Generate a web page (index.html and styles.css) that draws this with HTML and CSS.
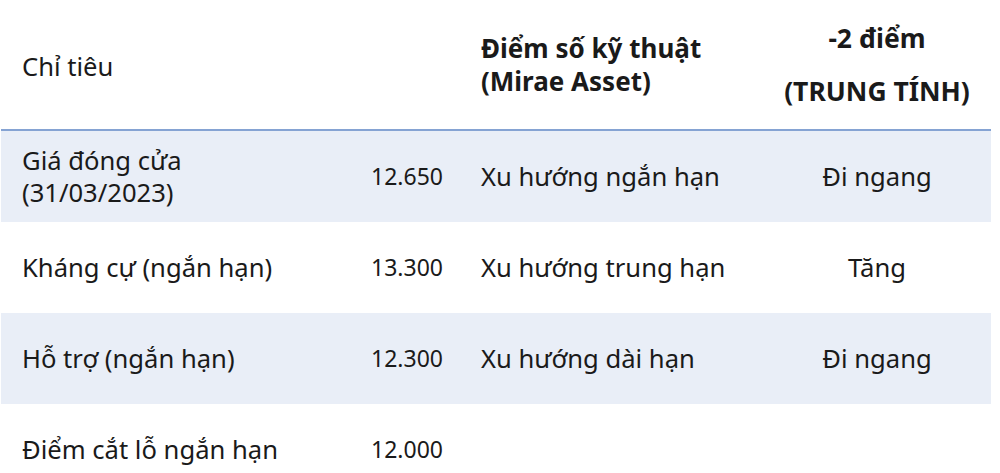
FILE: index.html
```html
<!DOCTYPE html>
<html lang="vi">
<head>
<meta charset="utf-8">
<link rel="stylesheet" href="styles.css">
</head>
<body>
<table class="tbl">
  <colgroup>
    <col class="c1"><col class="c2"><col class="c3"><col class="c4">
  </colgroup>
  <thead>
    <tr class="head">
      <th class="label">Chỉ tiêu</th>
      <th></th>
      <th class="score">Điểm số kỹ thuật<br>(Mirae Asset)</th>
      <th class="total"><p class="p1">-2 điểm</p><p class="p2">(TRUNG TÍNH)</p></th>
    </tr>
  </thead>
  <tbody>
    <tr class="shade">
      <td class="label two"><span class="ln">Giá đóng cửa</span><span class="ln">(31/03/2023)</span></td>
      <td class="num">12.650</td>
      <td class="trend">Xu hướng ngắn hạn</td>
      <td class="status">Đi ngang</td>
    </tr>
    <tr>
      <td class="label">Kháng cự (ngắn hạn)</td>
      <td class="num">13.300</td>
      <td class="trend">Xu hướng trung hạn</td>
      <td class="status">Tăng</td>
    </tr>
    <tr class="shade">
      <td class="label">Hỗ trợ (ngắn hạn)</td>
      <td class="num">12.300</td>
      <td class="trend">Xu hướng dài hạn</td>
      <td class="status">Đi ngang</td>
    </tr>
    <tr>
      <td class="label">Điểm cắt lỗ ngắn hạn</td>
      <td class="num">12.000</td>
      <td class="trend"></td>
      <td class="status"></td>
    </tr>
  </tbody>
</table>
</body>
</html>
```
FILE: styles.css
```css
html, body {
  margin: 0;
  padding: 0;
  background: #ffffff;
}
body {
  font-family: "Noto Sans", "Open Sans", sans-serif;
  color: #1a1a1a;
  font-size: 25.6px;
  line-height: 31px;
}
.tbl {
  margin-left: 1px;
  width: 990px;
  border-collapse: collapse;
  table-layout: fixed;
}
.c1 { width: 314px; }
.c2 { width: 145px; }
.c3 { width: 303px; }
.c4 { width: 228px; }
.head th {
  height: 125px;
  padding: 0;
  vertical-align: middle;
  border-bottom: 2px solid #85a3d3;
  text-align: left;
}
.head th.label {
  font-weight: 400;
  padding-left: 21px;
  padding-top: 4px;
}
.head th.score {
  font-weight: 700;
  font-size: 26px;
  line-height: 33px;
  padding-left: 21px;
}
.head th.total {
  font-weight: 700;
  font-size: 26.5px;
  text-align: center;
  line-height: 33px;
}
.head p { margin: 0; }
.head .p2 { margin-top: 20px; }
td {
  padding: 0;
  height: 91px;
  vertical-align: middle;
}
.shade td { background: #e9eef7; }
.label { padding-left: 21px; }
.two .ln { display: block; line-height: 31px; }
.two .ln + .ln { margin-top: 1px; }
.num { text-align: right; padding-right: 17px; font-size: 23px; }
.trend { padding-left: 21px; }
.status { text-align: center; }
```
